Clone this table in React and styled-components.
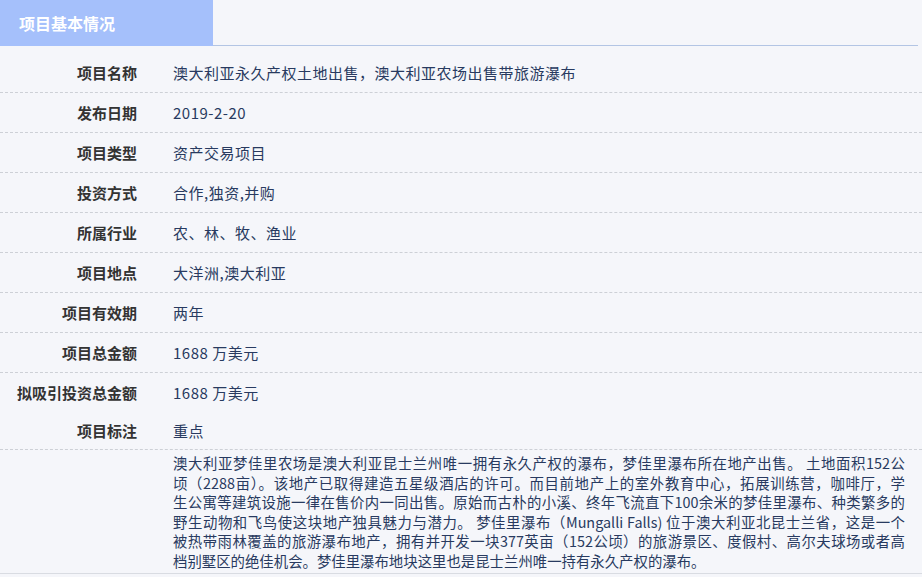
import React from "react";
import styled, { createGlobalStyle } from "styled-components";

const Global = createGlobalStyle`
  html, body { margin: 0; padding: 0; background: #f5f6fa; }
  body { font-family: "Noto Sans CJK SC", "Noto Sans", sans-serif; }
`;

const Page = styled.div`
  width: 922px;
  min-height: 577px;
  background: #f5f6fa;
  box-sizing: border-box;
`;

const Header = styled.div`
  display: flex;
  margin-right: 4px;
`;

const Tab = styled.div`
  width: 213px;
  height: 46px;
  box-sizing: border-box;
  background: #a5c0fb;
  color: #ffffff;
  font-size: 16px;
  font-weight: 700;
  line-height: 46px;
  padding-left: 19px;
`;

const HeaderRest = styled.div`
  flex: 1;
  height: 46px;
  box-sizing: border-box;
  border-bottom: 1px solid #b3c5e4;
`;

const Table = styled.div`
  padding-top: 7px;
`;

const Row = styled.div`
  display: grid;
  grid-template-columns: 137px 1fr;
  column-gap: 36px;
  align-items: center;
  box-sizing: border-box;
  height: ${(p) => p.$h || 40}px;
  border-bottom: ${(p) => (p.$noLine ? "none" : "1px dashed #cdd0d6")};
  font-size: 15px;
  line-height: 20px;
`;

const Label = styled.div`
  text-align: right;
  font-weight: 700;
  color: #333333;
  white-space: nowrap;
`;

const Value = styled.div`
  color: #283a60;
  white-space: nowrap;
  letter-spacing: 0.5px;
`;

const DescRow = styled.div`
  display: grid;
  grid-template-columns: 137px 732px;
  column-gap: 36px;
  padding-top: 3px;
  padding-bottom: 3px;
  border-bottom: 1px solid #d9dce2;
  font-size: 14.4px;
  line-height: 19.5px;
  color: #283a60;
`;

const Desc = styled.div`
  display: flex;
  flex-direction: column;
`;

const Line = styled.div`
  white-space: nowrap;
  ${(p) =>
    p.$justify
      ? "white-space: normal; text-align: justify; text-align-last: justify; text-justify: inter-character;"
      : ""}
`;

const rows = [
  ["项目名称", "澳大利亚永久产权土地出售，澳大利亚农场出售带旅游瀑布"],
  ["发布日期", "2019-2-20"],
  ["项目类型", "资产交易项目"],
  ["投资方式", "合作,独资,并购"],
  ["所属行业", "农、林、牧、渔业"],
  ["项目地点", "大洋洲,澳大利亚"],
  ["项目有效期", "两年"],
  ["项目总金额", "1688 万美元"],
  ["拟吸引投资总金额", "1688 万美元", { noLine: true }],
  ["项目标注", "重点", { h: 37 }],
];

const lines = [
  "澳大利亚梦佳里农场是澳大利亚昆士兰州唯一拥有永久产权的瀑布，梦佳里瀑布所在地产出售。 土地面积152公",
  "顷（2288亩）。该地产已取得建造五星级酒店的许可。而目前地产上的室外教育中心，拓展训练营，咖啡厅，学",
  "生公寓等建筑设施一律在售价内一同出售。原始而古朴的小溪、终年飞流直下100余米的梦佳里瀑布、种类繁多的",
  "野生动物和飞鸟使这块地产独具魅力与潜力。 梦佳里瀑布（Mungalli Falls) 位于澳大利亚北昆士兰省，这是一个",
  "被热带雨林覆盖的旅游瀑布地产，拥有并开发一块377英亩（152公顷）的旅游景区、度假村、高尔夫球场或者高",
  "档别墅区的绝佳机会。梦佳里瀑布地块这里也是昆士兰州唯一持有永久产权的瀑布。",
];

export default function App() {
  return (
    <Page>
      <Global />
      <Header>
        <Tab>项目基本情况</Tab>
        <HeaderRest />
      </Header>
      <Table>
        {rows.map(([label, value, opt = {}]) => (
          <Row key={label} $h={opt.h} $noLine={opt.noLine}>
            <Label>{label}</Label>
            <Value>{value}</Value>
          </Row>
        ))}
        <DescRow>
          <div />
          <Desc>
            {lines.map((l, i) => (
              <Line key={i} $justify={i < lines.length - 1}>
                {l}
              </Line>
            ))}
          </Desc>
        </DescRow>
      </Table>
    </Page>
  );
}
